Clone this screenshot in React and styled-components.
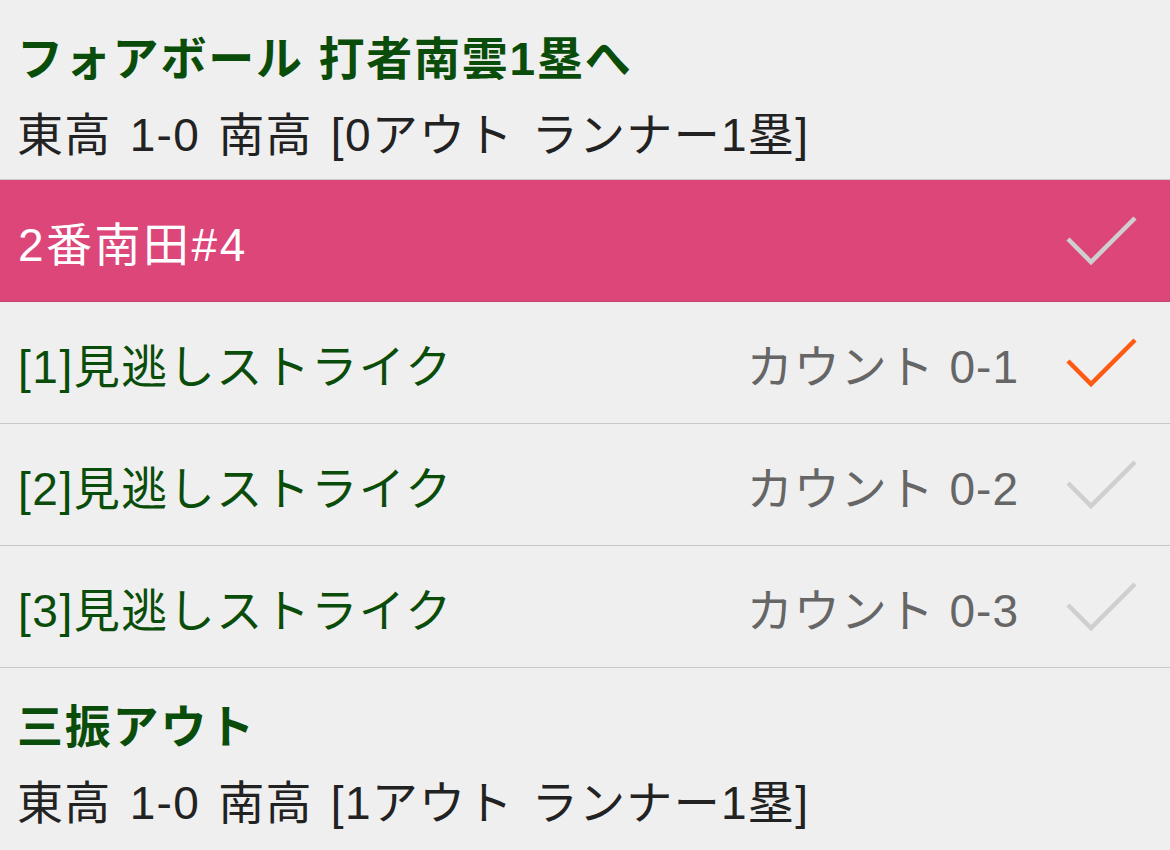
import styled, { createGlobalStyle } from "styled-components";

const GlobalStyle = createGlobalStyle`
  html, body {
    margin: 0;
    padding: 0;
    background: #efefef;
  }
  body {
    font-family: "Liberation Sans", "Noto Sans CJK JP", sans-serif;
  }
`;

const Page = styled.div`
  width: 1170px;
  height: 850px;
  overflow: hidden;
  background: #efefef;
`;

const Play = styled.div`
  display: flex;
  flex-direction: column;
  gap: 20px;
  padding: 31px 17px 0;
  height: 180px;
  box-sizing: border-box;
  border-bottom: ${(p) => (p.$last ? "none" : "1px solid #c8c8c8")};
`;

const PlayTitle = styled.div`
  font-size: 46px;
  font-weight: 700;
  line-height: 56px;
  letter-spacing: 1.8px;
  color: #0a4d0a;
  white-space: nowrap;
`;

const Score = styled.div`
  font-size: 46px;
  line-height: 56px;
  letter-spacing: 1.3px;
  word-spacing: 4px;
  color: #222;
  white-space: nowrap;
`;

const Row = styled.div`
  display: flex;
  align-items: center;
  height: 122px;
  box-sizing: border-box;
  padding: 0 32px 0 18px;
  background: ${(p) => (p.$batter ? "#dd4679" : "transparent")};
  border-bottom: 1px solid ${(p) => (p.$batter ? "#c2466f" : "#c8c8c8")};
`;

const RowLabel = styled.div`
  flex: 1;
  font-size: 46px;
  letter-spacing: ${(p) => (p.$light ? "2.5px" : "1.5px")};
  color: ${(p) => (p.$light ? "#fff" : "#0a4d0a")};
  white-space: nowrap;
`;

const Count = styled.div`
  font-size: 46px;
  letter-spacing: 1px;
  word-spacing: 1px;
  color: #666;
  margin-right: 47px;
  white-space: nowrap;
`;

const Check = ({ color }) => (
  <svg width="72" height="52" viewBox="0 0 72 52">
    <path
      d="M2 24 L25 47 L69 3"
      fill="none"
      stroke={color}
      strokeWidth="4.5"
    />
  </svg>
);

const pitches = [
  { n: 1, count: "0-1", done: true },
  { n: 2, count: "0-2" },
  { n: 3, count: "0-3" },
];

const App = () => {
  return (
    <Page>
      <GlobalStyle />
      <Play>
        <PlayTitle>フォアボール 打者南雲1塁へ</PlayTitle>
        <Score>東高 1-0 南高 [0アウト ランナー1塁]</Score>
      </Play>
      <Row $batter>
        <RowLabel $light>2番南田#4</RowLabel>
        <Check color="#cfcfcf" />
      </Row>
      {pitches.map((p) => (
        <Row key={p.n}>
          <RowLabel>[{p.n}]見逃しストライク</RowLabel>
          <Count>カウント {p.count}</Count>
          <Check color={p.done ? "#ff5a14" : "#cfcfcf"} />
        </Row>
      ))}
      <Play $last>
        <PlayTitle>三振アウト</PlayTitle>
        <Score>東高 1-0 南高 [1アウト ランナー1塁]</Score>
      </Play>
    </Page>
  );
};

export default App;
